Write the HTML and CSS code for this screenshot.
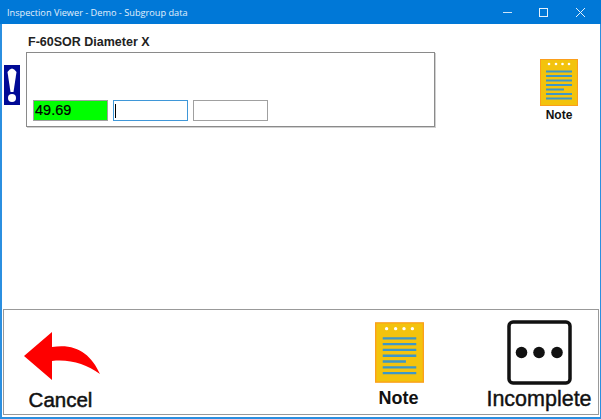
FILE: index.html
```
<!DOCTYPE html>
<html lang="en">
<head>
<meta charset="utf-8">
<title>Inspection Viewer - Demo - Subgroup data</title>
<link rel="stylesheet" href="styles.css">
</head>
<body>
<div class="window">
  <header class="titlebar">
    <span class="title">Inspection Viewer - Demo - Subgroup data</span>
    <div class="controls">
      <svg class="ctl" viewBox="0 0 37 24"><path d="M13 12.500h9" stroke="#cfe4f7" fill="none"/></svg>
      <svg class="ctl" viewBox="0 0 37 24"><rect x="12.500" y="8.500" width="8" height="8" stroke="#e6f1fb" fill="none"/></svg>
      <svg class="ctl" viewBox="0 0 37 24"><path d="M12 8l9 9M21 8l-9 9" stroke="#e6f1fb" fill="none"/></svg>
    </div>
  </header>
  <main class="content">
    <div class="alert-col">
      <svg class="alert" viewBox="0 0 16 40">
        <rect width="16" height="40" fill="#000a96"/>
        <path d="M3.500 7Q8 0 12.500 7L9.500 27H6.500Z" fill="#fff"/>
        <circle cx="8" cy="33" r="4" fill="#fff"/>
      </svg>
    </div>
    <div class="measure">
      <div class="measure-label">F-60SOR Diameter X</div>
      <div class="measure-box">
        <div class="field field-ok">49.69</div>
        <div class="field field-active"><span class="caret"></span></div>
        <div class="field"></div>
      </div>
    </div>
    <div class="note-side">
      <svg class="notepad notepad-sm" viewBox="0 0 38 47"><use href="#pad"/></svg>
      <span class="note-side-label">Note</span>
    </div>
  </main>
  <footer class="actions">
    <div class="action action-cancel">
      <svg class="back" viewBox="0 0 76 49"><path d="M0 24 L28 0 V15 C52 11 67 22 76 42 C62 32 46 27 28 29 V48 Z" fill="#fe0000"/></svg>
      <span class="action-label label-cancel">Cancel</span>
    </div>
    <div class="action action-note">
      <svg class="notepad notepad-lg" viewBox="0 0 38 47"><use href="#pad"/></svg>
      <span class="action-label label-note">Note</span>
    </div>
    <div class="action action-incomplete">
      <svg class="dots" viewBox="0 0 65 65">
        <rect x="2" y="2" width="61" height="61" rx="4" fill="#fff" stroke="#111" stroke-width="3.500"/>
        <circle cx="14.500" cy="32.500" r="5.800" fill="#111"/><circle cx="32" cy="32.500" r="5.800" fill="#111"/><circle cx="50" cy="32.500" r="5.800" fill="#111"/>
      </svg>
      <span class="action-label label-incomplete">Incomplete</span>
    </div>
  </footer>
</div>
<svg class="defs" width="0" height="0">
  <defs>
    <g id="pad">
      <rect x=".5" y=".5" width="37" height="46" fill="#f3c30d" stroke="#fb9f1c"/>
      <g fill="#fff"><circle cx="9" cy="5" r="1.300"/><circle cx="16" cy="5" r="1.300"/><circle cx="22.500" cy="5" r="1.300"/><circle cx="29" cy="5" r="1.300"/></g>
      <g stroke="#3d97c8" stroke-width="1.800">
        <path d="M6 12.500H32M6 17H32M6 21.500H32M6 26H32M6 30.500H24M6 35H32M6 39.500H32"/>
      </g>
    </g>
  </defs>
</svg>
</body>
</html>
```
FILE: styles.css
```
* { box-sizing: border-box; }
html, body { margin: 0; height: 100%; }
body { font-family: "Liberation Sans", Arial, sans-serif; background: #fff; color: #000; overflow: hidden; }
.window { height: 419px; width: 601px; display: flex; flex-direction: column; border: 1px solid #2b8fe0; border-top: 0; border-bottom-width: 2px; border-left-width: 2px; background: #fff; }
.titlebar { height: 24px; margin: 0 -1px 0 -2px; background: #0078d7; display: flex; align-items: center; justify-content: space-between; padding-left: 7px; flex: none; }
.title { color: #e3f0fb; font-size: 9.200px; font-family: "Open Sans", "Liberation Sans", sans-serif; }
.controls { display: flex; }
.ctl { width: 37px; height: 24px; display: block; }
.content { flex: 1; display: flex; padding-top: 11px; }
.alert-col { width: 23px; padding: 30px 0 0 2px; flex: none; }
.alert { width: 16px; height: 40px; display: block; }
.measure { width: 410px; flex: none; }
.measure-label { font-size: 12.500px; font-weight: bold; line-height: 14px; margin: 0 0 3px 3px; color: #222; }
.measure-box { height: 75px; margin-left: 1px; border: 1px solid #8a8a8a; box-shadow: 1px 1px 0 #d0d0d0; display: flex; align-items: flex-end; gap: 5px; padding: 0 0 5px 6px; }
.field { width: 75px; height: 21px; border: 1px solid #a0a0a0; font-size: 14.500px; line-height: 19px; padding-left: 1px; background: #fff; -webkit-text-stroke: .2px #000; }
.field-ok { background: #00ff00; }
.field-active { border-color: #3f97d8; display: flex; align-items: center; }
.caret { width: 1px; height: 14px; background: #000; }
.note-side { flex: 1; display: flex; flex-direction: column; align-items: center; padding: 24px 0 0 83px; }
.notepad { display: block; }
.notepad-sm { width: 38px; height: 47px; }
.note-side-label { font-size: 12px; font-weight: bold; line-height: 14px; margin-top: 2px; color: #111; }
.actions { height: 106px; flex: none; margin: 0 1px 2px 1px; border: 1px solid #999; display: flex; }
.action { display: flex; flex-direction: column; align-items: center; }
.action-label { line-height: 22px; color: #111; }
.label-cancel { font-size: 20.500px; -webkit-text-stroke: .5px #111; margin-top: 1px; margin-right: 3px; }
.label-note { font-size: 18px; font-weight: bold; margin-right: 1px; }
.label-incomplete { font-size: 21.500px; -webkit-text-stroke: .4px #111; margin-top: 1px; }
.action-cancel { width: 116px; padding: 22px 0 0 0; }
.back { width: 76px; height: 49px; margin: 0 0 7px 0; display: block; }
.action-note { width: 50px; margin-left: 254px; padding-top: 12px; }
.notepad-lg { width: 49px; height: 61px; margin-bottom: 4px; }
.action-incomplete { width: 110px; margin-left: 60px; padding-top: 10px; }
.dots { width: 65px; height: 65px; margin-bottom: 2px; display: block; }
.defs { position: absolute; }
```
